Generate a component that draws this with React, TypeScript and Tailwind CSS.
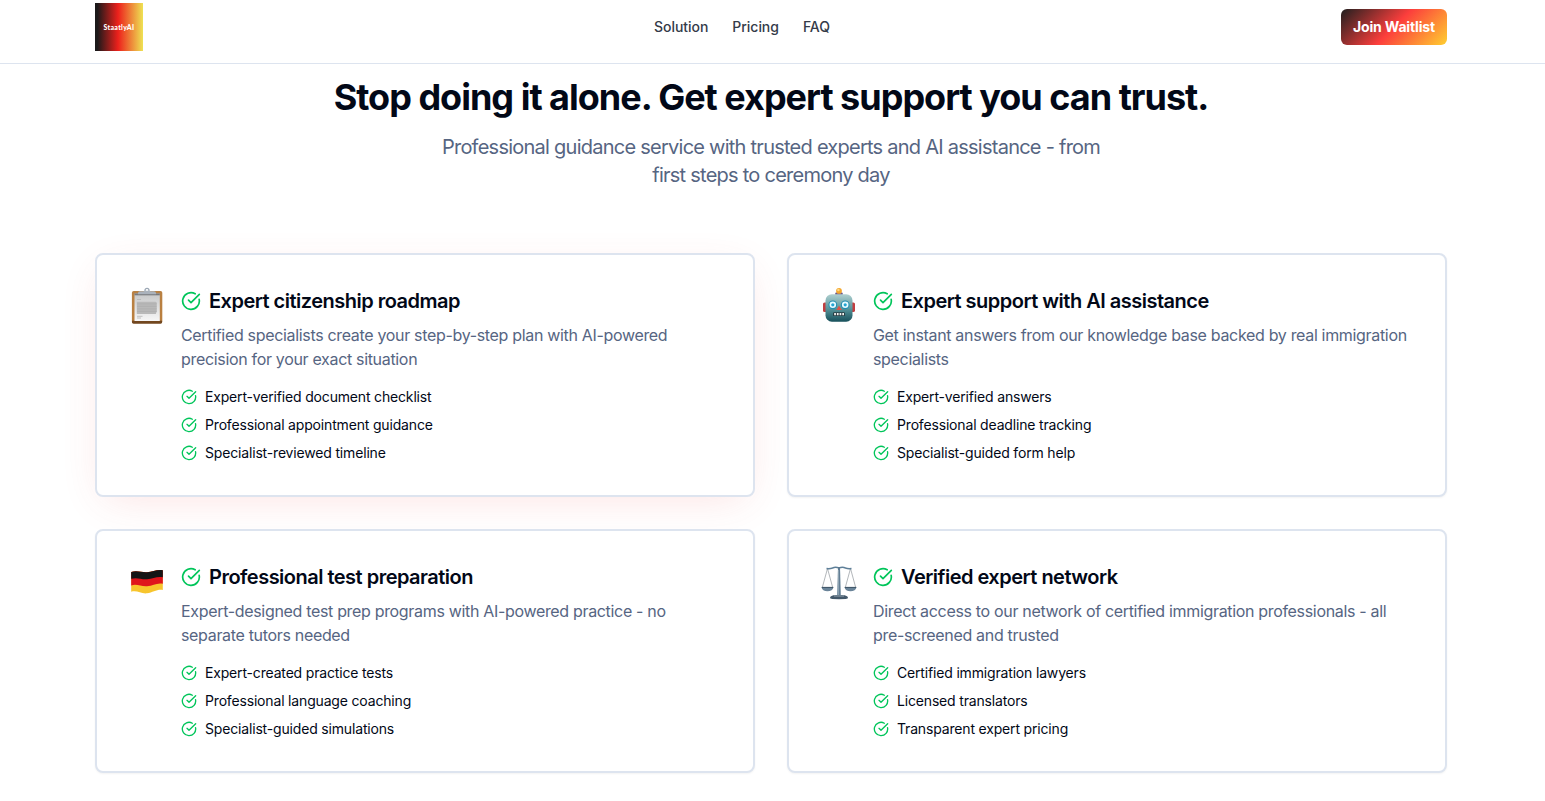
import type { ReactNode } from 'react';
import { CircleCheckBig } from 'lucide-react';

function ClipboardEmoji() {
  return (
    <svg viewBox="0 0 36 40" className="h-10 w-9">
      <defs>
        <linearGradient id="paper" x1="0" y1="0" x2="0" y2="1">
          <stop offset="0" stopColor="#c6c7c8" />
          <stop offset="1" stopColor="#f7f7f7" />
        </linearGradient>
        <linearGradient id="board" x1="0" y1="0" x2="0" y2="1">
          <stop offset="0" stopColor="#b98143" />
          <stop offset="0.9" stopColor="#ba7f3f" />
          <stop offset="1" stopColor="#6e4319" />
        </linearGradient>
      </defs>
      <rect x="2.9" y="4" width="30.400" height="32.500" rx="1.800" fill="url(#board)" />
      <path d="M3 33.800h30v1.200q0 1.500-1.500 1.500h-27Q3 36.500 3 35Z" fill="#72471f" />
      <rect x="5.500" y="6.500" width="25.300" height="27.500" fill="url(#paper)" />
      <path d="M5.500 6.500h25.300v1.800H5.500Z" fill="#77797d" />
      <circle cx="18" cy="3.400" r="2" fill="none" stroke="#9ba7b4" strokeWidth="1.300" />
      <path d="M9 7.300V6q0-1.700 2-1.700h3.500L16 3.700h4l1.500.6H25q2 0 2 1.700v1.300Z" fill="#aab2bc" />
      <path d="M8 12.500h4M8 29.300h5.500M8 31h4" stroke="#b5b5b5" strokeWidth=".8" />
      <path d="M7.800 14.800h19l1 1v8.500l-1 2.700H7.800Z" fill="#b9b9b9" />
      <path d="M8 16.800h19.500M8 19.300h19.500M8 21.800h19.500M8 24.300h19.500" stroke="#adadad" strokeWidth=".8" />
    </svg>
  );
}

function RobotEmoji() {
  return (
    <svg viewBox="0 0 36 40" className="h-10 w-9">
      <defs>
        <linearGradient id="robotHead" x1="0" y1="0" x2="0" y2="1">
          <stop offset="0" stopColor="#b0d0d0" />
          <stop offset="0.5" stopColor="#5b989e" />
          <stop offset="1" stopColor="#17505b" />
        </linearGradient>
      </defs>
      <rect x="2" y="15.500" width="5" height="9.500" rx="1.600" fill="#c23e40" />
      <rect x="29" y="15.500" width="5" height="9.500" rx="1.600" fill="#c23e40" />
      <path d="M14.300 9V6.500q0-1.500 3.700-1.500t3.700 1.500V9Z" fill="#65518c" />
      <circle cx="18" cy="3.900" r="2.900" fill="#f3a62c" />
      <circle cx="17.400" cy="3" r="1.200" fill="#ffd984" />
      <rect x="4.500" y="7.200" width="27" height="27.500" rx="6.300" fill="url(#robotHead)" />
      <circle cx="11.800" cy="17.800" r="4.400" fill="#248fb2" />
      <circle cx="24.200" cy="17.800" r="4.400" fill="#248fb2" />
      <circle cx="11.800" cy="17.800" r="3.300" fill="#e7fbff" />
      <circle cx="24.200" cy="17.800" r="3.300" fill="#e7fbff" />
      <circle cx="11.800" cy="17.800" r="1.600" fill="#24a4d2" />
      <circle cx="24.200" cy="17.800" r="1.600" fill="#24a4d2" />
      <path d="m18 18.700 2.700 4.400h-5.400Z" fill="#df5348" />
      <rect x="12" y="25.300" width="12" height="3.800" rx="1.200" fill="#263c43" />
      <path d="M13.200 27.200h9.800" stroke="#f3f4f1" strokeWidth="2.200" strokeDasharray="1.700 1" />
    </svg>
  );
}

function FlagEmoji() {
  return (
    <svg viewBox="0 0 36 40" className="h-10 w-9">
      <path d="M2.200 9C8 7 12 9.500 18 9.200C24 8.900 28 6.200 33.800 7.300V27C28 26 24 29.500 18 30.300C12 31 8 27 2.200 28.800Z" fill="#f7c52d" />
      <path d="M2.200 9C8 7 12 9.500 18 9.200C24 8.900 28 6.200 33.800 7.300V20.800C28 19.500 24 22.800 18 23.300C12 23.700 8 20.600 2.200 22.400Z" fill="#df151c" />
      <path d="M2.200 9C8 7 12 9.500 18 9.200C24 8.900 28 6.200 33.800 7.300V14.200C28 13 24 15.800 18 16.200C12 16.600 8 14 2.200 15.800Z" fill="#151515" />
    </svg>
  );
}

function ScalesEmoji() {
  return (
    <svg viewBox="0 0 36 40" className="h-10 w-9" fill="none">
      <path d="m6.500 5.500-5.200 19m5.200-19 5.200 19m17.800-19-5.200 19m5.200-19 5.200 19" stroke="#a0a5a9" strokeWidth=".8" />
      <path d="M5.500 5.500q3.500.5 6-.5 3-1.500 6.500 0 3.500-1.500 6.500 0 2.500 1 6 .5" stroke="#5e7f98" strokeWidth="1.500" />
      <path d="M17 4h2l.8 29h-3.600Z" fill="#5d7b92" />
      <path d="M17.600 7v25" stroke="#a2b2be" strokeWidth=".8" />
      <path d="M.5 24.200h12q-.8 4-6 4t-6-4ZM23.500 24.200h12q-.8 4-6 4t-6-4Z" fill="#6a8499" />
      <path d="M.8 24.400h11.400M23.800 24.400h11.400" stroke="#3b5163" strokeWidth="1" />
      <path d="M9 35q0-2.600 6-3h6q6 .4 6 3 0 1.200-9 1.200T9 35Z" fill="#43586a" />
      <path d="M13 33h10" stroke="#a8b7c1" strokeWidth=".8" />
    </svg>
  );
}

interface Feature {
  icon: ReactNode;
  title: string;
  description: string;
  items: string[];
  shadow: string;
}

const features: Feature[] = [
  {
    icon: <ClipboardEmoji />,
    title: 'Expert citizenship roadmap',
    description:
      'Certified specialists create your step-by-step plan with AI-powered precision for your exact situation',
    items: ['Expert-verified document checklist', 'Professional appointment guidance', 'Specialist-reviewed timeline'],
    shadow: 'shadow-[0_10px_40px_-10px_rgba(239,68,68,0.16)]',
  },
  {
    icon: <RobotEmoji />,
    title: 'Expert support with AI assistance',
    description: 'Get instant answers from our knowledge base backed by real immigration specialists',
    items: ['Expert-verified answers', 'Professional deadline tracking', 'Specialist-guided form help'],
    shadow: 'shadow-[0_1px_2px_rgba(0,0,0,0.05)]',
  },
  {
    icon: <FlagEmoji />,
    title: 'Professional test preparation',
    description: 'Expert-designed test prep programs with AI-powered practice - no separate tutors needed',
    items: ['Expert-created practice tests', 'Professional language coaching', 'Specialist-guided simulations'],
    shadow: 'shadow-[0_1px_2px_rgba(0,0,0,0.05)]',
  },
  {
    icon: <ScalesEmoji />,
    title: 'Verified expert network',
    description: 'Direct access to our network of certified immigration professionals - all pre-screened and trusted',
    items: ['Certified immigration lawyers', 'Licensed translators', 'Transparent expert pricing'],
    shadow: 'shadow-[0_1px_2px_rgba(0,0,0,0.05)]',
  },
];

function FeatureCard({ feature }: { feature: Feature }) {
  return (
    <div className={`flex h-[244px] items-start gap-4 rounded-lg border-2 border-[#dde4ef] bg-white p-8 ${feature.shadow}`}>
      <div className="w-9 shrink-0">{feature.icon}</div>
      <div className="min-w-0 flex-1">
        <h3 className="flex items-center gap-2 text-xl font-semibold tracking-[-0.51px]">
          <CircleCheckBig className="h-5 w-5 shrink-0 text-[#00c55a]" />
          {feature.title}
        </h3>
        <p className="mt-2 text-base tracking-[-0.325px] text-[#566582]">{feature.description}</p>
        <ul className="mt-4 space-y-2">
          {feature.items.map((item) => (
            <li key={item} className="flex items-center gap-2 text-sm tracking-[-0.17px]">
              <CircleCheckBig className="h-4 w-4 shrink-0 text-[#00c55a]" />
              {item}
            </li>
          ))}
        </ul>
      </div>
    </div>
  );
}

export default function App() {
  return (
    <div className="h-[801px] overflow-hidden bg-white font-['Inter',sans-serif] text-[#020817]">
      {/* Header */}
      <header className="h-16 border-b border-[#dde4ef]">
        <div className="flex h-[54px] w-[1542px] items-center justify-between px-[95px]">
          <div className="flex h-12 w-12 items-center justify-center bg-[linear-gradient(90deg,#1c191a_5%,#ed211c_48%,#eee253_100%)]">
            <span className="font-['Lato',sans-serif] text-[7px] font-black tracking-[0.3px] text-white">StaatlyAI</span>
          </div>
          <nav className="flex gap-6 text-sm font-medium tracking-[-0.04px] text-[#343b49]">
            <a href="#solution">Solution</a>
            <a href="#pricing">Pricing</a>
            <a href="#faq">FAQ</a>
          </nav>
          <button className="h-9 w-[106px] rounded-md bg-[linear-gradient(135deg,#1f1f1f_0%,#fc3e3c_50%,#ffcf30_100%)] text-sm font-bold tracking-[-0.15px] text-white">
            Join Waitlist
          </button>
        </div>
      </header>

      {/* Solution */}
      <main className="w-[1542px] px-[95px] pt-[13px]">
        <div className="text-center">
          <h1 className="text-4xl leading-10 font-bold tracking-[-1px]">
            Stop doing it alone. Get expert support you can trust.
          </h1>
          <p className="mx-auto mt-4 max-w-2xl text-xl tracking-[-0.75px] text-[#566582]">
            Professional guidance service with trusted experts and AI assistance - from first steps to ceremony day
          </p>
        </div>
        <div className="mt-16 grid grid-cols-2 gap-8">
          {features.map((feature) => (
            <FeatureCard key={feature.title} feature={feature} />
          ))}
        </div>
      </main>
    </div>
  );
}
